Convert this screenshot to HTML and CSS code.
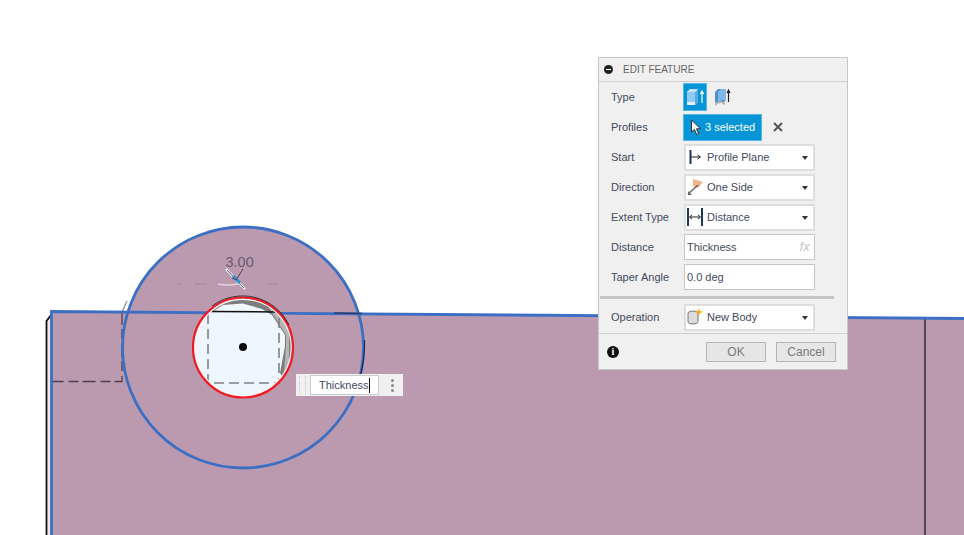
FILE: index.html
```html
<!DOCTYPE html>
<html lang="en">
<head>
  <meta charset="UTF-8" />
  <title>Edit Feature</title>
  <link rel="stylesheet" href="styles.css">
</head>
<body>

<div class="viewport">
  <!-- Model canvas -->
  <svg class="model" width="964" height="535" viewBox="0 0 964 535">
    <path d="M47 321 L52 314 L52 535 L47 535 Z" fill="#efe9e4"/>
    <path d="M46.5 535 L46.5 321 L51 315" class="edge-black"/>
    <path d="M51.5 311.5 L964 318.5 L964 535 L51.5 535 Z" class="body-fill"/>
    <path d="M122 312 L127 301" stroke="#9a9a9a" stroke-width="1.5" fill="none"/>
    <circle cx="243" cy="347.5" r="120.5" class="body-fill"/>
    <path d="M925 319 L925 535" stroke="#38324c" stroke-width="1.6"/>
    <path d="M122 312 L122 381.5 L52 381.5" class="dash-dark"/>
    <path d="M51.5 535 L51.5 311.5 L964 318.5" class="edge-blue"/>
    <circle cx="243" cy="347.5" r="120.5" fill="none" class="edge-blue"/>
    <path d="M334 313 L362 313.5" stroke="#2b3a66" stroke-width="1.5"/>
    <path d="M364.5 340 A121 121 0 0 1 360 377" stroke="#1d2b4d" stroke-width="1.2" fill="none"/>

    <!-- Hole -->
    <circle cx="243" cy="347.5" r="50" fill="#eef7fd"/>
    <path d="M212 309 L223 303 L243 297 L265 301 L283 316 L292 338 L292 358 L283 378 L280 373 L285 346 L285 335 L272 315 L262 309 L243 303.5 L223 305 L212 312 Z" fill="#7d7d7d"/>
    <path d="M266 303 A48 48 0 0 1 289 335 L289 362 L284 373 L286 346 L286 335 L273 314 Z" fill="#b5b5b5"/>
    <path d="M211 311.5 L276 312" stroke="#111" stroke-width="1.5"/>
    <path d="M208 314 L208 383 L279 383 L279 314" class="dash-grey"/>
    <circle cx="243" cy="347.5" r="48.3" fill="none" stroke="#f7f7f7" stroke-width="1.4"/>
    <circle cx="243" cy="347.5" r="50" fill="none" stroke="#f01a24" stroke-width="2.2"/>
    <path d="M212 306 A51.5 51.5 0 0 1 289 325" stroke="#1c1c1c" stroke-width="0.8" fill="none"/>
    <circle cx="243" cy="347" r="4" fill="#0a0a0a"/>

    <!-- Dimension -->
    <path d="M177 284 L181 284 M195 284 L207 284 M268 284 L278 284" stroke="#9c8695" stroke-width="1" fill="none"/>
    <path d="M218 284 Q228 286 238 284" stroke="#e0d6dd" stroke-width="1.5" fill="none"/>
    <path d="M226 269 L245 289" stroke="#f1f6fa" stroke-width="2.5"/>
    <path d="M227 270 L244 288" stroke="#28445e" stroke-width="0.8"/>
    <path d="M233 276 L240 283" stroke="#2a93cf" stroke-width="3"/>
    <path d="M232 278 L236 280 L243 269" stroke="#4c4352" stroke-width="1" fill="none"/>
    <text x="225.5" y="267" class="dim-text">3.00</text>
  </svg>

  <!-- Inline distance input -->
  <div class="mini-input">
    <span class="grip"></span>
    <span class="mini-field">Thickness<i class="caret"></i></span>
    <span class="kebab"><b></b><b></b><b></b></span>
  </div>

  <!-- Edit feature dialog -->
  <div class="dialog">
    <div class="dialog-head">
      <span class="collapse"></span>
      <span>EDIT FEATURE</span>
    </div>

    <div class="dialog-body">
      <div class="row">
        <label>Type</label>
        <div class="type-buttons">
          <span class="type-btn active">
            <svg width="20" height="20" viewBox="0 0 20 20">
              <path d="M2 5 L5 2 L13 2 L13 15 L10 18 L2 18 Z" fill="#8fcbf7"/>
              <path d="M10 5 L13 2 L13 15 L10 18 Z" fill="#5ea9e2"/>
              <path d="M2 5 L10 5 L13 2 L5 2 Z" fill="#c4e5fb"/>
              <path d="M2 15 L10 15 L10 18 L2 18 Z" fill="#e8f0f5"/>
              <path d="M17 16 L17 5 M15.5 7 L17 4 L18.5 7" stroke="#fff" stroke-width="1.2" fill="none"/>
            </svg>
          </span>
          <span class="type-btn">
            <svg width="20" height="20" viewBox="0 0 20 20">
              <path d="M2 5 L5 2 L13 2 L13 13 L11 15 L2 15 Z" fill="#4f92cf"/>
              <path d="M5 5 L8 2 L13 2 L13 13 L9 13 L5 15 Z" fill="#7fb7e6"/>
              <path d="M2 15 L5 15 Q8 13 10 15 L12 15 L12 18 L10 17 Q8 15 5 17 L2 19 Z" fill="#b5b5b5"/>
              <path d="M15.5 15 L15.5 4 M14 6 L15.5 3 L17 6" stroke="#222" stroke-width="1.2" fill="none"/>
            </svg>
          </span>
        </div>
      </div>

      <div class="row">
        <label>Profiles</label>
        <span class="select-btn">
          <svg width="12" height="17" viewBox="0 0 12 17">
            <path d="M1.5 1 L1.5 13 L4.5 10.5 L6.5 15.5 L8.5 14.5 L6.5 9.8 L10.5 9.8 Z" fill="#f4f4f4" stroke="#333" stroke-width="1"/>
          </svg>
          3 selected
        </span>
        <svg class="clear" width="10" height="10" viewBox="0 0 10 10">
          <path d="M1 1 L9 9 M9 1 L1 9" stroke="#555" stroke-width="2"/>
        </svg>
      </div>

      <div class="row">
        <label>Start</label>
        <div class="combo">
          <svg width="16" height="18" viewBox="0 0 16 18">
            <path d="M3.5 2 L3.5 16" stroke="#1d3461" stroke-width="2"/>
            <path d="M4 9 L13 9 M10.5 7 L13.5 9 L10.5 11" stroke="#222" stroke-width="1" fill="none"/>
          </svg>
          <span>Profile Plane</span>
          <i class="arrow"></i>
        </div>
      </div>

      <div class="row">
        <label>Direction</label>
        <div class="combo">
          <svg width="16" height="18" viewBox="0 0 16 18">
            <path d="M6 1 L16 4 L11 10 L6 8 Z" fill="#f2b48c"/>
            <path d="M1 16 L11 7" stroke="#666" stroke-width="1.5"/>
            <path d="M1 13 L1 17 L5 17 Z" fill="#666"/>
          </svg>
          <span>One Side</span>
          <i class="arrow"></i>
        </div>
      </div>

      <div class="row">
        <label>Extent Type</label>
        <div class="combo">
          <svg width="16" height="18" viewBox="0 0 16 18">
            <path d="M1 0 L1 18 M15 0 L15 18" stroke="#1d3461" stroke-width="2"/>
            <path d="M3 9 L13 9 M5 7 L2.5 9 L5 11 M11 7 L13.5 9 L11 11" stroke="#222" stroke-width="1" fill="none"/>
          </svg>
          <span>Distance</span>
          <i class="arrow"></i>
        </div>
      </div>

      <div class="row">
        <label>Distance</label>
        <div class="field">Thickness<em>fx</em></div>
      </div>

      <div class="row">
        <label>Taper Angle</label>
        <div class="field">0.0 deg</div>
      </div>

      <div class="divider"></div>

      <div class="row">
        <label>Operation</label>
        <div class="combo">
          <svg width="16" height="18" viewBox="0 0 16 18">
            <path d="M1 5 Q1 3 6 3 Q11 3 11 5 L11 14 Q11 16 6 16 Q1 16 1 14 Z" fill="#dcdcdc" stroke="#777" stroke-width="1"/>
            <path d="M12 0 L13 3 L16 4 L13 5 L12 8 L11 5 L8 4 L11 3 Z" fill="#f7b500"/>
          </svg>
          <span>New Body</span>
          <i class="arrow"></i>
        </div>
      </div>
    </div>

    <div class="dialog-foot">
      <span class="info">i</span>
      <span class="btn">OK</span>
      <span class="btn">Cancel</span>
    </div>
  </div>
</div>

</body>
</html>
```

FILE: styles.css
```css
* {
  margin: 0;
  padding: 0;
  box-sizing: border-box;
}

body {
  font-family: 'Liberation Sans', Arial, sans-serif;
  background-color: #fff;
  color: #333;
  overflow: hidden;
}

.viewport {
  position: relative;
  width: 964px;
  height: 535px;
  overflow: hidden;
}

/* Model canvas */
.model {
  position: absolute;
  left: 0;
  top: 0;
}

.body-fill {
  fill: #bb9aaf;
}

.edge-blue {
  fill: none;
  stroke: #3c6fc4;
  stroke-width: 2.8;
}

.edge-black {
  fill: none;
  stroke: #111;
  stroke-width: 1.8;
}

.dash-dark {
  fill: none;
  stroke: #4a3f55;
  stroke-width: 1.3;
  stroke-dasharray: 13 4 10 5;
}

.dash-grey {
  fill: none;
  stroke: #808080;
  stroke-width: 1.6;
  stroke-dasharray: 10 5;
}

.dim-text {
  font-family: 'Liberation Sans', Arial, sans-serif;
  font-size: 14.5px;
  fill: #6a5b70;
}

/* Inline input */
.mini-input {
  position: absolute;
  left: 296px;
  top: 374px;
  width: 107px;
  height: 22px;
  display: flex;
  align-items: center;
  background-color: #f0f0f0;
}

.grip {
  width: 7px;
  height: 18px;
  margin-left: 3px;
  margin-right: 4px;
  border-left: 1px dotted #ccc;
  border-right: 1px dotted #ccc;
}

.mini-field {
  display: flex;
  align-items: center;
  width: 69px;
  height: 20px;
  padding-left: 8px;
  background-color: #fff;
  border: 1px solid #ccc;
  font-size: 11px;
  color: #3d4c63;
}

.caret {
  width: 1px;
  height: 15px;
  background-color: #111;
}

.kebab {
  display: flex;
  flex-direction: column;
  gap: 2px;
  margin-left: 12px;
}

.kebab b {
  width: 3px;
  height: 3px;
  border-radius: 50%;
  background-color: #8a8a8a;
}

/* Dialog */
.dialog {
  position: absolute;
  left: 598px;
  top: 57px;
  width: 250px;
  height: 313px;
  display: flex;
  flex-direction: column;
  background-color: #f0f0f0;
  border: 1px solid #c8c8c8;
  font-size: 11px;
  color: #3f4a5c;
}

.dialog-head {
  display: flex;
  align-items: center;
  gap: 10px;
  height: 24px;
  padding-left: 5px;
  border-bottom: 1px solid #cfcfcf;
  font-size: 10px;
  color: #666;
}

.collapse {
  position: relative;
  width: 9px;
  height: 9px;
  border-radius: 50%;
  background-color: #222;
}

.collapse::after {
  content: "";
  position: absolute;
  left: 2px;
  top: 4px;
  width: 5px;
  height: 1px;
  background-color: #fff;
}

.dialog-body {
  flex: 1;
}

.row {
  display: flex;
  align-items: center;
  height: 30px;
  padding-left: 12px;
}

.row label {
  width: 73px;
  flex-shrink: 0;
}

.type-buttons {
  display: flex;
  gap: 4px;
  margin-left: -1px;
}

.type-btn {
  display: flex;
  align-items: center;
  justify-content: center;
  width: 24px;
  height: 28px;
}

.type-btn.active {
  background-color: #0696d7;
  border: 1px solid #55b6e6;
}

.select-btn {
  display: flex;
  align-items: center;
  gap: 3px;
  width: 79px;
  height: 27px;
  margin-left: -1px;
  padding-left: 6px;
  background-color: #0696d7;
  border: 1px solid #55b6e6;
  color: #fff;
}

.clear {
  margin-left: 11px;
}

.combo {
  display: flex;
  align-items: center;
  gap: 4px;
  position: relative;
  width: 131px;
  height: 27px;
  padding-left: 1px;
  background-color: #fff;
  border: 2px solid #dedede;
}

.arrow {
  position: absolute;
  right: 5px;
  top: 10px;
  border-left: 3px solid transparent;
  border-right: 3px solid transparent;
  border-top: 4px solid #333;
}

.field {
  display: flex;
  align-items: center;
  justify-content: space-between;
  width: 131px;
  height: 26px;
  padding: 0 4px 0 2px;
  background-color: #fff;
  border: 1px solid #c6c6c6;
}

.field em {
  font-family: 'Liberation Sans', Arial, sans-serif;
  font-size: 12px;
  letter-spacing: 0.5px;
  color: #c2c2c2;
}

.divider {
  height: 3px;
  margin: 4px 13px 3px 1px;
  background-color: #c4c4c4;
}

.dialog-foot {
  display: flex;
  align-items: center;
  height: 36px;
  padding-left: 8px;
  border-top: 1px solid #d0d0d0;
}

.info {
  display: flex;
  align-items: center;
  justify-content: center;
  width: 12px;
  height: 12px;
  margin-right: 87px;
  border-radius: 50%;
  background-color: #111;
  color: #fff;
  font-family: 'Liberation Serif', serif;
  font-weight: bold;
  font-size: 10px;
}

.btn {
  display: flex;
  align-items: center;
  justify-content: center;
  width: 60px;
  height: 20px;
  margin-right: 10px;
  background-color: #e6e6e6;
  border: 1px solid #b5b5b5;
  font-size: 12px;
  color: #7a7a7a;
}
```
